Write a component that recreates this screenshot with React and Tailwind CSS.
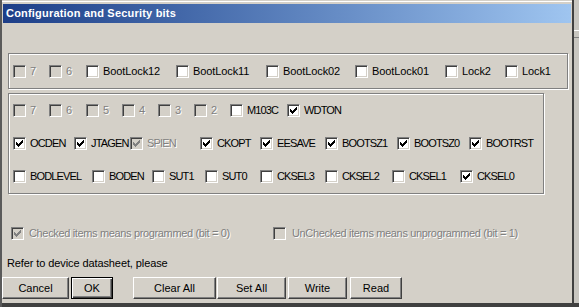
import React from 'react';

// classic 7x7 check mark, one 3px run per column
const checkPath = [2, 3, 4, 3, 2, 1, 0].map((y, x) => `M${x} ${y}h1v3h-1z`).join('');

const CheckBox = ({ checked, disabled }) => (
  <span
    className={`flex shrink-0 items-center justify-center w-[13px] h-[13px] border border-t-[#808080] border-l-[#808080] border-r-white border-b-white shadow-[inset_1px_1px_0_#404040,inset_-1px_-1px_0_#d4d0c8] ${
      disabled ? 'bg-[#d4d0c8]' : 'bg-white'
    }`}
  >
    {checked && (
      <svg width="7" height="7" viewBox="0 0 7 7" className="block" shapeRendering="crispEdges">
        <path d={checkPath} fill={disabled ? '#808080' : '#000'} />
      </svg>
    )}
  </span>
);

// caps labels are narrower in the original dialog font
const Item = ({ label, w, checked, disabled }) => (
  <div className={`flex items-center gap-[4px] shrink-0 ${w || ''}`}>
    <CheckBox checked={checked} disabled={disabled} />
    <span
      className={`text-[11px] leading-[13px] whitespace-nowrap ${
        /^[A-Z0-9]{3,}$/.test(label) ? 'tracking-[-0.85px]' : 'tracking-[-0.1px]'
      } ${disabled ? 'text-[#808080] [text-shadow:1px_1px_0_#fff]' : 'text-black'}`}
    >
      {label}
    </span>
  </div>
);

const lockBits = [
  { label: '7', w: 'w-[36px]', disabled: true },
  { label: '6', w: 'w-[37px]', disabled: true },
  { label: 'BootLock12', w: 'w-[90px]' },
  { label: 'BootLock11', w: 'w-[90px]' },
  { label: 'BootLock02', w: 'w-[89px]' },
  { label: 'BootLock01', w: 'w-[90px]' },
  { label: 'Lock2', w: 'w-[60px]' },
  { label: 'Lock1' },
];

const fuseRows = [
  [
    { label: '7', w: 'w-[36px]', disabled: true },
    { label: '6', w: 'w-[37px]', disabled: true },
    { label: '5', w: 'w-[36px]', disabled: true },
    { label: '4', w: 'w-[36px]', disabled: true },
    { label: '3', w: 'w-[36px]', disabled: true },
    { label: '2', w: 'w-[36px]', disabled: true },
    { label: 'M103C', w: 'w-[57px]' },
    { label: 'WDTON', checked: true },
  ],
  [
    { label: 'OCDEN', w: 'w-[61px]', checked: true },
    { label: 'JTAGEN', w: 'w-[56px]', checked: true },
    { label: 'SPIEN', w: 'w-[70px]', checked: true, disabled: true },
    { label: 'CKOPT', w: 'w-[60px]', checked: true },
    { label: 'EESAVE', w: 'w-[65px]', checked: true },
    { label: 'BOOTSZ1', w: 'w-[72px]', checked: true },
    { label: 'BOOTSZ0', w: 'w-[72px]', checked: true },
    { label: 'BOOTRST', checked: true },
  ],
  [
    { label: 'BODLEVEL', w: 'w-[79px]' },
    { label: 'BODEN', w: 'w-[60px]' },
    { label: 'SUT1', w: 'w-[53px]' },
    { label: 'SUT0', w: 'w-[55px]' },
    { label: 'CKSEL3', w: 'w-[65px]' },
    { label: 'CKSEL2', w: 'w-[67px]' },
    { label: 'CKSEL1', w: 'w-[68px]' },
    { label: 'CKSEL0', checked: true },
  ],
];

const Button = ({ children, className = '', isDefault }) => (
  <button
    className={`h-[22px] shrink-0 flex items-center justify-center text-[11px] text-black bg-[#d4d0c8] ${
      isDefault
        ? 'border border-black shadow-[inset_1px_1px_0_#fff,inset_-1px_-1px_0_#404040,inset_-2px_-2px_0_#808080]'
        : 'border border-t-white border-l-white border-r-[#404040] border-b-[#404040] shadow-[inset_-1px_-1px_0_#808080]'
    } ${className}`}
  >
    {children}
  </button>
);

export default function App() {
  return (
    <div className="w-[579px] h-[307px] flex bg-[#d4d0c8] overflow-hidden font-['Liberation_Sans',Arial,sans-serif]">
      <div className="w-[574px] h-full flex flex-col border-l-2 border-l-[#5a5a5a] border-r-2 border-r-[#404040]">
        <div className="h-[4px] shrink-0 shadow-[inset_0_1px_0_#d4d0c8,inset_0_2px_0_#fff]" />
        <div className="h-[19px] shrink-0 mx-[1px] flex items-center pl-[3px] bg-gradient-to-r from-[#1d3e88] to-[#9fc5f0]">
          <span className="text-white font-bold text-[11px] tracking-[0.2px] whitespace-nowrap">
            Configuration and Security bits
          </span>
        </div>

        <div className="flex-1 flex flex-col">
          <div className="mt-[30px] ml-[6px] w-[560px] h-[36px] shrink-0 flex items-center pl-[4px] border border-[#808080] shadow-[1px_1px_0_#fff,inset_1px_1px_0_#fff]">
            {lockBits.map((b, i) => (
              <Item key={i} {...b} />
            ))}
          </div>

          <div className="mt-[4px] ml-[6px] w-[536px] h-[101px] shrink-0 flex flex-col gap-[20px] pt-[10px] pl-[4px] border border-[#808080] shadow-[1px_1px_0_#fff,inset_1px_1px_0_#fff]">
            {fuseRows.map((row, r) => (
              <div key={r} className="h-[13px] flex items-center">
                {row.map((b, i) => (
                  <Item key={i} {...b} />
                ))}
              </div>
            ))}
          </div>

          <div className="mt-[33px] ml-[9px] h-[13px] flex items-center">
            <div className="w-[262px] flex items-center gap-[5px]">
              <CheckBox checked disabled />
              <span className="text-[11px] leading-[13px] tracking-[-0.35px] whitespace-nowrap text-[#808080] [text-shadow:1px_1px_0_#fff]">
                Checked items means programmed (bit = 0)
              </span>
            </div>
            <div className="flex items-center gap-[6px]">
              <CheckBox disabled />
              <span className="text-[11px] leading-[13px] tracking-[-0.35px] whitespace-nowrap text-[#808080] [text-shadow:1px_1px_0_#fff]">
                UnChecked items means unprogrammed (bit = 1)
              </span>
            </div>
          </div>

          <p className="mt-[16px] ml-[5px] text-[11px] leading-[14px] tracking-[-0.1px] text-black">
            Refer to device datasheet, please
          </p>

          <div className="mt-[7px] flex">
            <Button className="w-[67px]">Cancel</Button>
            <Button className="w-[42px] ml-[2px]" isDefault>OK</Button>
            <Button className="w-[83px] ml-[20px]">Clear All</Button>
            <Button className="w-[69px] ml-[1px]">Set All</Button>
            <Button className="w-[59px] ml-[2px]">Write</Button>
            <Button className="w-[52px] ml-[3px]">Read</Button>
          </div>
        </div>

        <div className="h-[4px] shrink-0 bg-[#404040]" />
      </div>

      <div className="flex-1 flex flex-col bg-[#c8c6c0]">
        <div className="mt-[30px] h-[1px] bg-white" />
        <div className="mt-[6px] h-[1px] bg-[#808080]" />
        <div className="flex-1" />
        <div className="h-[4px] bg-[#404040]" />
      </div>
    </div>
  );
}
